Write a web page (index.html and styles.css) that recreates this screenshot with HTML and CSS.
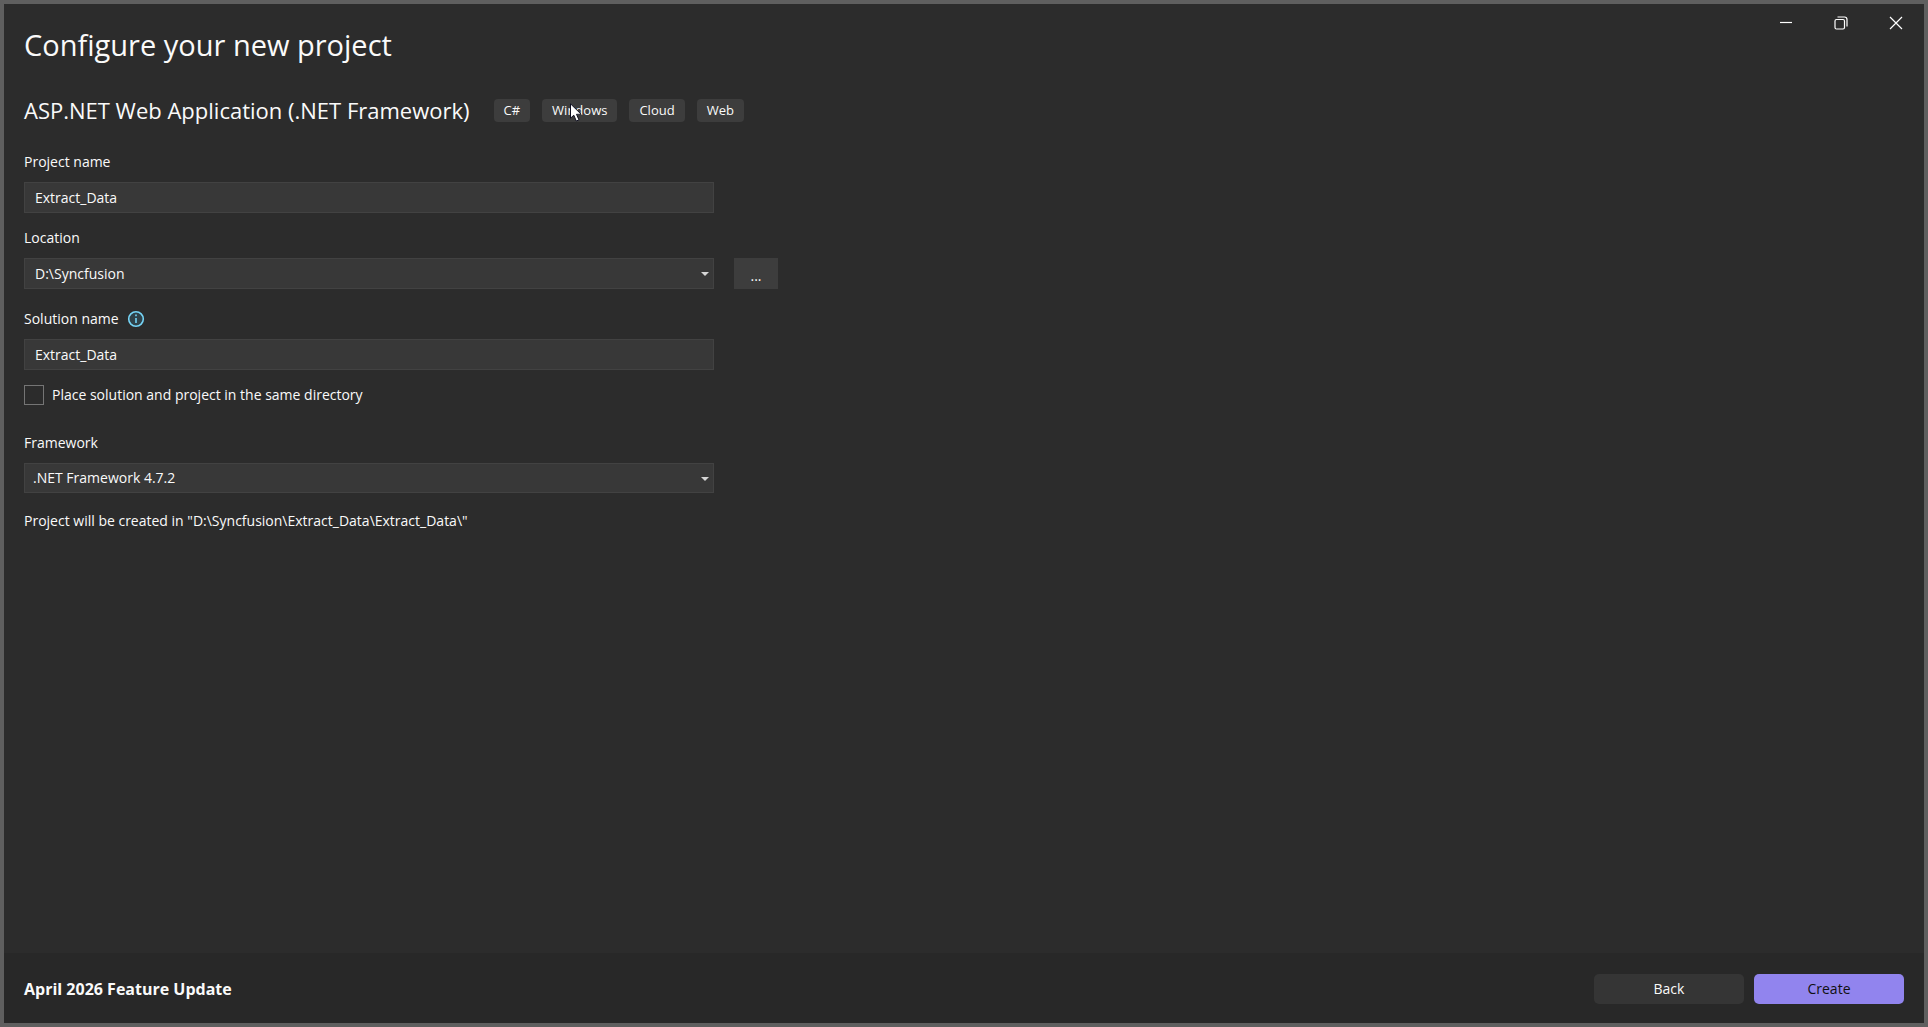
FILE: index.html
```html
<!DOCTYPE html>
<html lang="en">
<head>
  <meta charset="UTF-8" />
  <meta name="viewport" content="width=device-width, initial-scale=1.0"/>
  <title>Configure your new project</title>
  <link rel="stylesheet" href="styles.css">
</head>
<body>
  <div class="window">
    <header class="title-bar">
      <h1>Configure your new project</h1>
      <div class="window-controls">
        <button type="button" class="window-btn" aria-label="Minimize">
          <svg width="14" height="14" viewBox="0 0 14 14"><path d="M1 6.5H13"/></svg>
        </button>
        <button type="button" class="window-btn" aria-label="Restore">
          <svg width="14" height="14" viewBox="0 0 14 14"><rect x="1" y="3.5" width="9.5" height="9.5" rx="1.5"/><path d="M3.5 1H10.5Q13 1 13 3.5V10.5"/></svg>
        </button>
        <button type="button" class="window-btn" aria-label="Close">
          <svg width="14" height="14" viewBox="0 0 14 14"><path d="M1 1L13 13M13 1L1 13"/></svg>
        </button>
      </div>
    </header>

    <main class="content">
      <div class="template-row">
        <h2>ASP.NET Web Application (.NET Framework)</h2>
        <ul class="tags">
          <li class="tag">C#</li>
          <li class="tag">Windows
            <svg class="pointer" width="12" height="19" viewBox="0 0 12 19"><path d="M.5 .8V15.2L3.8 12.2L6.3 18L9 16.9L6.5 11.3H11.2Z"/></svg>
          </li>
          <li class="tag">Cloud</li>
          <li class="tag">Web</li>
        </ul>
      </div>

      <form class="project-form" id="projectForm">
        <div class="field">
          <label for="projectName">Project name</label>
          <input type="text" class="text-input" id="projectName" value="Extract_Data">
        </div>

        <div class="field">
          <label for="location">Location</label>
          <div class="location-row">
            <div class="select-wrap">
              <select class="text-input" id="location">
                <option>D:\Syncfusion</option>
              </select>
            </div>
            <button type="button" class="browse-btn" aria-label="Browse">...</button>
          </div>
        </div>

        <div class="field solution-field">
          <div class="label-row">
            <label for="solutionName">Solution name</label>
            <svg class="info-icon" width="18" height="18" viewBox="0 0 18 18"><circle cx="9" cy="9" r="7.3"/><path d="M9 8V13M9 4.6V6.2"/></svg>
          </div>
          <input type="text" class="text-input" id="solutionName" value="Extract_Data">
        </div>

        <div class="check-row">
          <input type="checkbox" class="checkbox" id="sameDirectory">
          <label for="sameDirectory">Place solution and project in the same directory</label>
        </div>

        <div class="field framework-field">
          <label for="framework">Framework</label>
          <div class="select-wrap">
            <select class="text-input framework-select" id="framework">
              <option>.NET Framework 4.7.2</option>
            </select>
          </div>
        </div>

        <p class="path-note">Project will be created in "D:\Syncfusion\Extract_Data\Extract_Data\"</p>
      </form>
    </main>

    <footer class="footer">
      <strong class="update-name">April 2026 Feature Update</strong>
      <div class="actions">
        <button type="button" class="action-btn">Back</button>
        <button type="submit" form="projectForm" class="action-btn create-btn">Create</button>
      </div>
    </footer>
  </div>
</body>
</html>
```
FILE: styles.css
```css
* {
  margin: 0;
  padding: 0;
  box-sizing: border-box;
}

body {
  background: #2c2c2c;
  color: #fafafa;
  font-family: "Segoe UI", "Open Sans", "Noto Sans", sans-serif;
  font-size: 14px;
  line-height: 20px;
}

button, input, select {
  font: inherit;
  color: inherit;
}

.window {
  display: flex;
  flex-direction: column;
  min-height: 100vh;
  border: 4px solid #5f5f5f;
}

/* Title bar */
.title-bar {
  display: flex;
  justify-content: space-between;
  align-items: flex-start;
  padding: 0 1px 0 20px;
}

h1 {
  padding-top: 21px;
  font-size: 29px;
  font-weight: 400;
  line-height: 40px;
}

.window-controls {
  display: flex;
}

.window-btn {
  display: flex;
  align-items: center;
  justify-content: center;
  width: 55px;
  height: 38px;
  background: none;
  border: none;
}

.window-btn svg {
  fill: none;
  stroke: #ffffff;
  stroke-width: 1.2;
}

/* Template name and tags */
.content {
  flex: 1;
  padding: 30px 20px;
}

.template-row {
  display: flex;
  align-items: center;
  gap: 24px;
  margin-bottom: 27px;
}

h2 {
  font-size: 22px;
  font-weight: 400;
  line-height: 30px;
}

.tags {
  display: flex;
  gap: 12px;
  list-style: none;
}

.tag {
  position: relative;
  padding: 0 10px;
  background: #3d3d3d;
  border-radius: 4px;
  font-size: 13px;
  line-height: 23px;
}

.pointer {
  position: absolute;
  top: 4px;
  left: 28px;
  fill: #ffffff;
  stroke: #101020;
  stroke-width: 1;
}

/* Form */
.project-form {
  display: flex;
  flex-direction: column;
  max-width: 690px;
}

.field {
  display: flex;
  flex-direction: column;
  gap: 10px;
  margin-bottom: 15px;
}

.text-input {
  appearance: none;
  width: 100%;
  height: 31px;
  padding: 0 10px;
  background: #383838;
  border: 1px solid #424242;
  border-radius: 0;
}

.location-row {
  display: flex;
  gap: 20px;
  margin-right: -64px;
}

.select-wrap {
  position: relative;
  flex: 1;
}

.select-wrap::after {
  content: "";
  position: absolute;
  top: 14px;
  right: 5px;
  border: 4px solid transparent;
  border-top-color: #d6d6d6;
  border-bottom: none;
  pointer-events: none;
}

.browse-btn {
  width: 44px;
  height: 31px;
  padding-top: 4px;
  background: #3d3d3d;
  border: none;
}

.label-row {
  display: flex;
  align-items: center;
  gap: 8px;
}

.info-icon {
  fill: #2f4148;
  stroke: #75d3f5;
  stroke-width: 1.6;
}

.solution-field {
  margin-top: 5px;
}

.check-row {
  display: flex;
  align-items: center;
  gap: 8px;
  margin-bottom: 28px;
}

.checkbox {
  appearance: none;
  width: 20px;
  height: 20px;
  border: 1px solid #757575;
}

.framework-field {
  margin-bottom: 18px;
}

.framework-select {
  height: 30px;
  padding: 0 8px;
}

/* Footer */
.footer {
  display: flex;
  align-items: center;
  justify-content: space-between;
  height: 70px;
  padding: 2px 20px 0;
  background: #282828;
}

.update-name {
  font-size: 16px;
  font-weight: 700;
}

.actions {
  display: flex;
  gap: 10px;
}

.action-btn {
  width: 150px;
  height: 30px;
  background: #353535;
  border: none;
  border-radius: 5px;
}

.create-btn {
  background: #9184ee;
  color: #101010;
}
```
